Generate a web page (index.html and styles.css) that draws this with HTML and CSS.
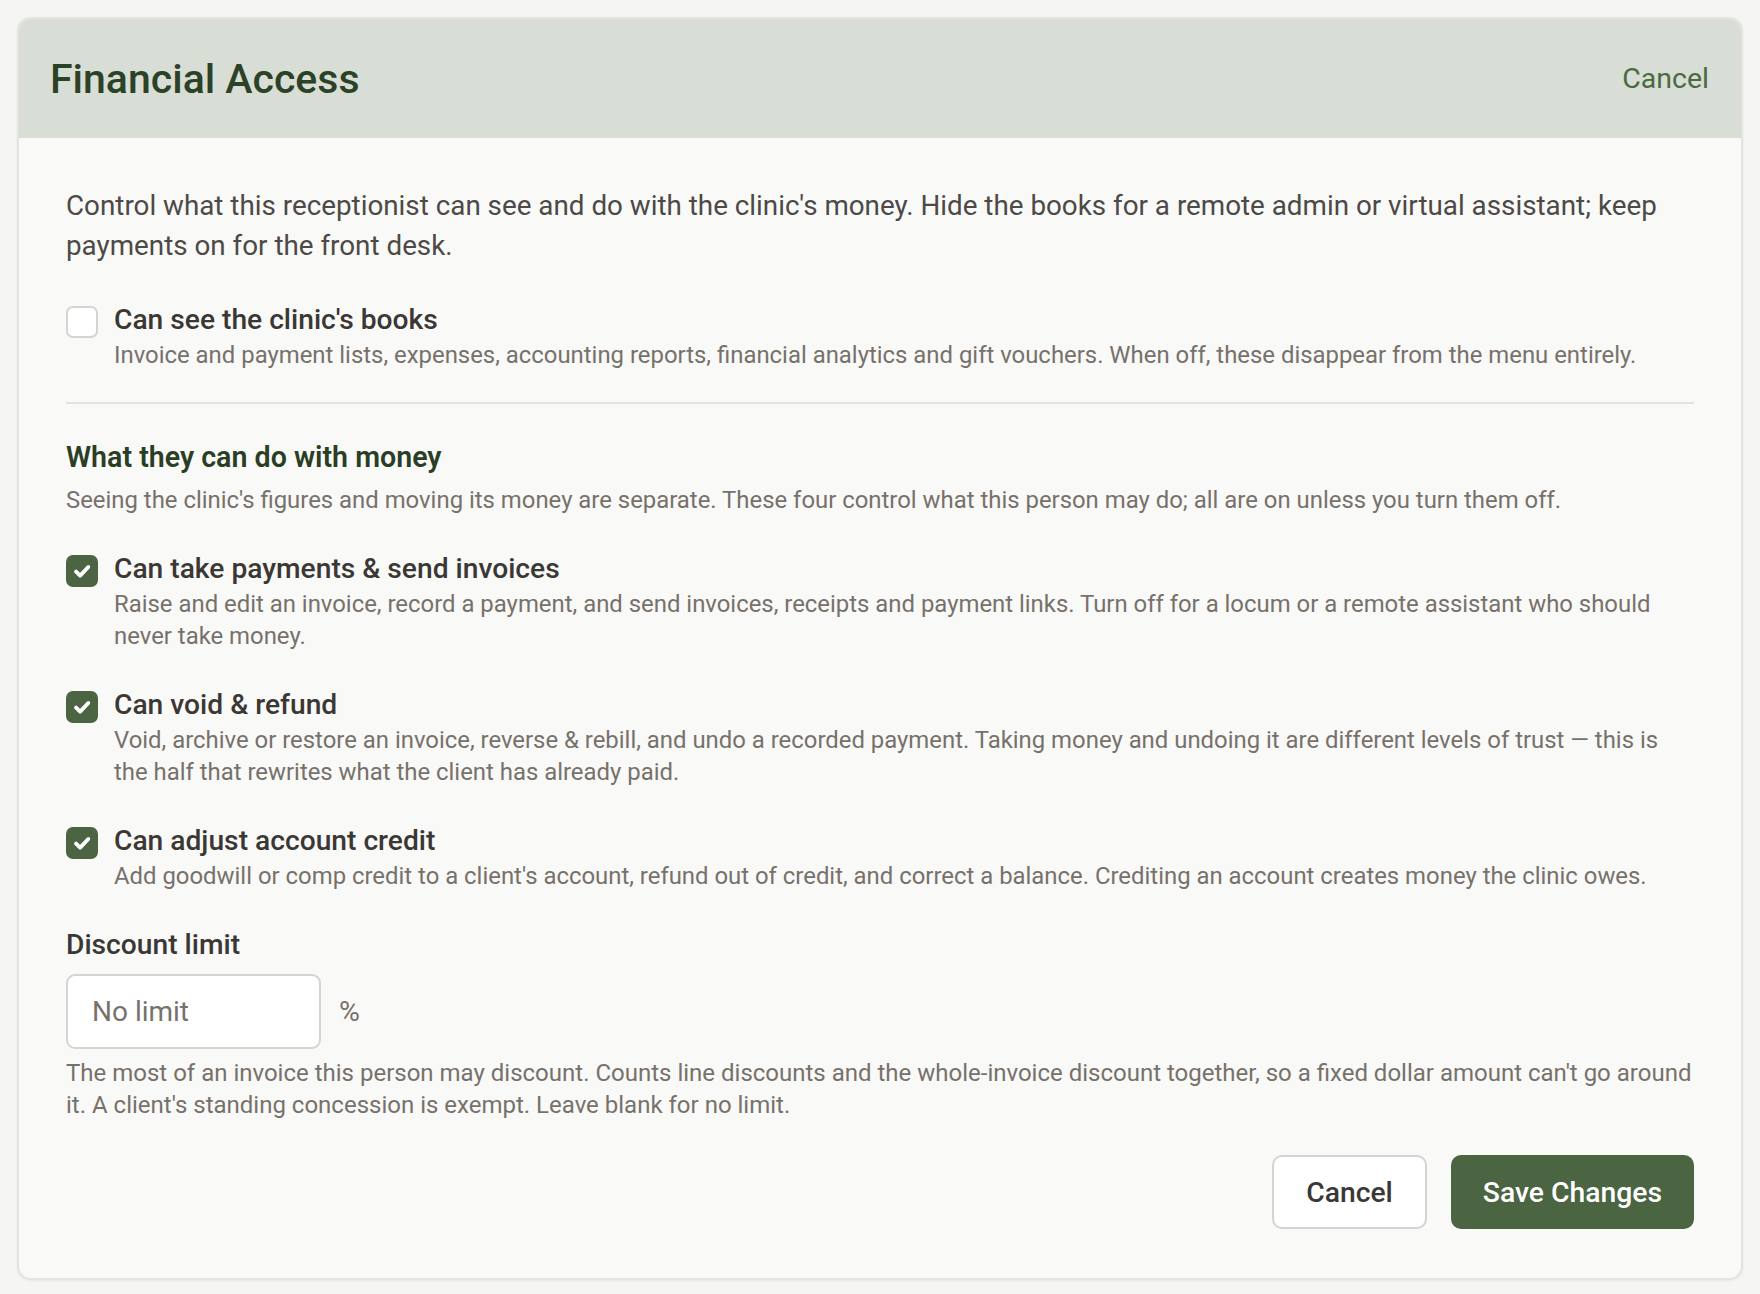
FILE: index.html
```html
<!DOCTYPE html>
<html lang="en">

<head>
    <meta charset="UTF-8">
    <meta name="viewport" content="width=device-width, initial-scale=1.0">
    <title>Financial Access</title>
    <link rel="stylesheet" href="styles.css">
</head>

<body>
    <div class="card">
        <div class="card-header">
            <h1>Financial Access</h1>
            <a href="#" class="header-cancel">Cancel</a>
        </div>
        <form class="card-body" id="financeForm">
            <p class="intro">Control what this receptionist can see and do with the clinic's money. Hide the books for a remote admin or virtual assistant; keep payments on for the front desk.</p>

            <label class="option">
                <input type="checkbox" name="seeBooks">
                <span class="box"></span>
                <span class="option-text">
                    <span class="option-title">Can see the clinic's books</span>
                    <span class="option-desc">Invoice and payment lists, expenses, accounting reports, financial analytics and gift vouchers. When off, these disappear from the menu entirely.</span>
                </span>
            </label>

            <hr class="divider">

            <h3 class="section-title">What they can do with money</h3>
            <p class="section-desc">Seeing the clinic's figures and moving its money are separate. These four control what this person may do; all are on unless you turn them off.</p>

            <div class="option-list">
                <label class="option">
                    <input type="checkbox" name="takePayments" checked>
                    <span class="box"></span>
                    <span class="option-text">
                        <span class="option-title">Can take payments &amp; send invoices</span>
                        <span class="option-desc">Raise and edit an invoice, record a payment, and send invoices, receipts and payment links. Turn off for a locum or a remote assistant who should never take money.</span>
                    </span>
                </label>
                <label class="option">
                    <input type="checkbox" name="voidRefund" checked>
                    <span class="box"></span>
                    <span class="option-text">
                        <span class="option-title">Can void &amp; refund</span>
                        <span class="option-desc">Void, archive or restore an invoice, reverse &amp; rebill, and undo a recorded payment. Taking money and undoing it are different levels of trust — this is the half that rewrites what the client has already paid.</span>
                    </span>
                </label>
                <label class="option">
                    <input type="checkbox" name="adjustCredit" checked>
                    <span class="box"></span>
                    <span class="option-text">
                        <span class="option-title">Can adjust account credit</span>
                        <span class="option-desc">Add goodwill or comp credit to a client's account, refund out of credit, and correct a balance. Crediting an account creates money the clinic owes.</span>
                    </span>
                </label>
            </div>

            <div class="field">
                <label for="discountLimit" class="field-label">Discount limit</label>
                <div class="field-row">
                    <input type="text" id="discountLimit" name="discountLimit" placeholder="No limit">
                    <span class="unit">%</span>
                </div>
                <p class="field-help">The most of an invoice this person may discount. Counts line discounts and the whole-invoice discount together, so a fixed dollar amount can't go around it. A client's standing concession is exempt. Leave blank for no limit.</p>
            </div>

            <div class="actions">
                <button type="button" class="btn btn-secondary">Cancel</button>
                <button type="submit" class="btn btn-primary">Save Changes</button>
            </div>
        </form>
    </div>
</body>

</html>
```

FILE: styles.css
```css
* {
    box-sizing: border-box;
}

body {
    margin: 0;
    padding: 17px;
    background-color: #f5f5f3;
    font-family: Roboto, "Noto Sans", sans-serif;
    color: #3b3735;
}

.card {
    background-color: #f9f9f7;
    border: 2px solid #e4e3df;
    border-radius: 14px;
    box-shadow: 0 1px 3px rgba(0, 0, 0, 0.06);
    overflow: hidden;
}

.card-header {
    display: flex;
    align-items: center;
    justify-content: space-between;
    height: 119px;
    padding: 0 32px 0 31px;
    background-color: #d8ddd5;
}

.card-header h1 {
    margin: 0;
    font-size: 41px;
    font-weight: 500;
    color: #2b4227;
}

.header-cancel {
    font-size: 28.5px;
    color: #4b6a42;
    text-decoration: none;
}

.card-body {
    display: flex;
    flex-direction: column;
    padding: 48px 47px 49px;
}

.intro {
    margin: 0 0 37px;
    font-size: 27.8px;
    line-height: 39.5px;
    color: #4d4946;
}

.option {
    display: flex;
    align-items: flex-start;
    gap: 16px;
    cursor: pointer;
}

.option input {
    display: none;
}

.option .box {
    flex: none;
    width: 32px;
    height: 32px;
    margin-top: 4px;
    background-color: #fff;
    border: 2px solid #d8d3d0;
    border-radius: 7px;
}

.option input:checked + .box {
    border-color: #4b6543;
    background-color: #4b6543;
    background-image: url("data:image/svg+xml,%3Csvg xmlns='http://www.w3.org/2000/svg' viewBox='0 0 24 24'%3E%3Cpath d='M6.5 12.5l3.8 3.8 7.5-8' fill='none' stroke='white' stroke-width='3.6' stroke-linecap='round' stroke-linejoin='round'/%3E%3C/svg%3E");
    background-size: 26px 26px;
    background-position: center;
    background-repeat: no-repeat;
}

.option-text {
    display: flex;
    flex-direction: column;
}

.option-title {
    font-size: 28.2px;
    font-weight: 500;
    line-height: 36px;
    color: #3b3735;
}

.option-desc {
    margin-top: 1px;
    font-size: 23.9px;
    line-height: 32px;
    color: #77716c;
}

.divider {
    width: 100%;
    margin: 31px 0 36px;
    border: none;
    border-top: 2px solid #e4e2de;
}

.section-title {
    margin: 0 0 10px;
    font-size: 28.6px;
    font-weight: 600;
    line-height: 34px;
    color: #2a3e26;
}

.section-desc {
    margin: 0 0 35px;
    font-size: 23.9px;
    line-height: 32px;
    color: #77716c;
}

.option-list {
    display: flex;
    flex-direction: column;
    gap: 35px;
}

.field {
    margin-top: 36px;
}

.field-label {
    display: block;
    margin-bottom: 12px;
    font-size: 28.2px;
    font-weight: 500;
    line-height: 34px;
    color: #3b3735;
}

.field-row {
    display: flex;
    align-items: center;
    gap: 18px;
}

.field-row input {
    width: 255px;
    height: 75px;
    padding: 0 24px;
    font-family: inherit;
    font-size: 28px;
    color: #3b3735;
    background-color: #fff;
    border: 2px solid #d8d3d0;
    border-radius: 9px;
}

.field-row input::placeholder {
    color: #77716c;
}

.unit {
    font-size: 28.5px;
    color: #77716c;
}

.field-help {
    margin: 8px 0 0;
    font-size: 24px;
    line-height: 32px;
    color: #77716c;
}

.actions {
    display: flex;
    justify-content: flex-end;
    gap: 24px;
    margin-top: 34px;
}

.btn {
    height: 74px;
    padding: 0 32px;
    font-family: inherit;
    font-size: 28.3px;
    font-weight: 500;
    border-radius: 10px;
    cursor: pointer;
}

.btn-secondary {
    background-color: #fff;
    color: #3b3735;
    border: 2px solid #d8d3d0;
}

.btn-primary {
    background-color: #4b6543;
    color: #fff;
    border: none;
}

.btn-primary:hover {
    background-color: #3d5436;
}
```
